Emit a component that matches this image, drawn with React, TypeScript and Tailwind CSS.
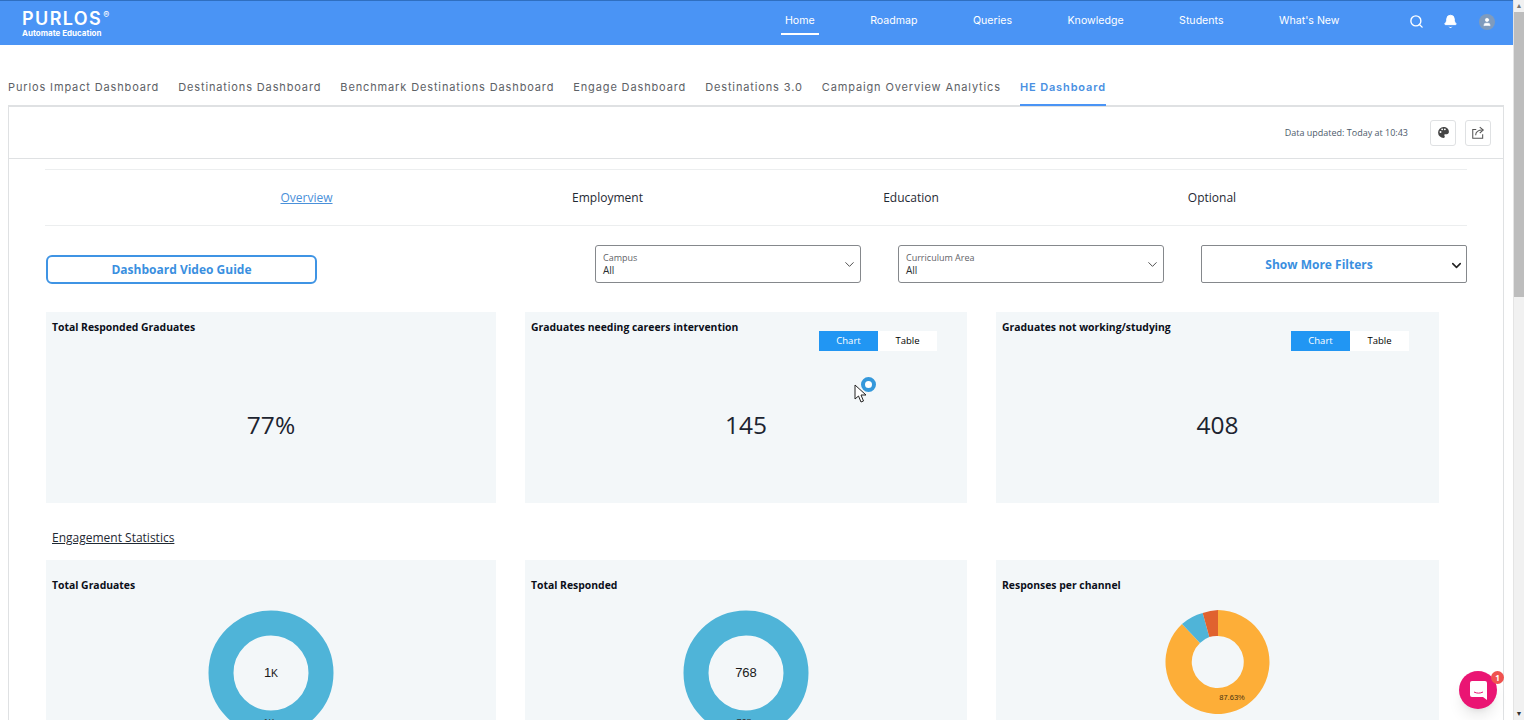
import { Bell, ChevronDown, Search, User } from "lucide-react"

const navItems = [
  { label: "Home", active: true },
  { label: "Roadmap" },
  { label: "Queries" },
  { label: "Knowledge" },
  { label: "Students" },
  { label: "What's New" },
]

const tabs = [
  "Purlos Impact Dashboard",
  "Destinations Dashboard",
  "Benchmark Destinations Dashboard",
  "Engage Dashboard",
  "Destinations 3.0",
  "Campaign Overview Analytics",
  "HE Dashboard",
]

function ChartToggle() {
  return (
    <div className="flex h-[20px] w-[118px] text-[9.5px] leading-[20px]">
      <div className="w-[59px] bg-[#2196f3] text-center text-white">Chart</div>
      <div className="w-[59px] bg-white text-center text-black">Table</div>
    </div>
  )
}

function Card({ title, width, toggle, value, low, children }: { title: string; width: string; toggle?: boolean; value?: string; low?: boolean; children?: React.ReactNode }) {
  return (
    <div className={`${width} ${low ? "pt-[18px]" : "pt-[8px]"} relative h-[191px] shrink-0 bg-[#f3f7f9] px-[6px]`}>
      <div className="flex h-[14px] justify-between">
        <h3 className="text-[10.4px] font-bold leading-[14px] text-[#0b0f19]">{title}</h3>
        {toggle && (
          <div className="mr-[24px] mt-[11px]">
            <ChartToggle />
          </div>
        )}
      </div>
      {value && <div className="absolute inset-x-0 top-[95px] text-center text-[24.5px] leading-[36px] text-[#1c2430]">{value}</div>}
      {children}
    </div>
  )
}

function Ring({ label, small, tail }: { label: string; small?: string; tail: string }) {
  return (
    <svg width="126" height="160" viewBox="0 0 126 160" className="mx-auto mt-[18px] block font-['Liberation_Sans',sans-serif]">
      <circle cx="63" cy="63" r="50" fill="none" stroke="#4fb4d8" strokeWidth="25" />
      <text x="63" y="67" textAnchor="middle" fontSize="13" fill="#1a1a1a">
        {label}
        {small && <tspan fontSize="10.500">{small}</tspan>}
      </text>
      <text x="61" y="115" textAnchor="middle" fontSize="9" fill="#333">{tail}</text>
    </svg>
  )
}

function Pie() {
  // 87.63% orange, then blue and red up to the top of the ring
  return (
    <svg width="106" height="106" viewBox="0 0 106 106" className="mx-auto mt-[17px] block font-['Liberation_Sans',sans-serif]">
      <path d="M53 1 A52 52 0 1 1 17 15 L35 34 A26 26 0 1 0 53 27 Z" fill="#fdae38" />
      <path d="M17 15 A52 52 0 0 1 37.700 4 L44.300 28 A26 26 0 0 0 35 34 Z" fill="#4fb4d8" />
      <path d="M37.700 4 A52 52 0 0 1 53 1 L53 27 A26 26 0 0 0 44.300 28 Z" fill="#e0622f" />
      <text x="67" y="90.500" textAnchor="middle" fontSize="7.500" fill="#4a3410">87.63%</text>
    </svg>
  )
}

function FilterSelect({ label }: { label: string }) {
  return (
    <div className="flex h-[38px] w-[266px] items-center justify-between rounded-[3px] border border-[#85888c] pl-[7px] pr-[3px]">
      <div className="leading-[13px]">
        <div className="text-[9px] text-[#5f6368]">{label}</div>
        <div className="text-[10px] text-[#2b2f33]">All</div>
      </div>
      <ChevronDown className="h-[15px] w-[15px] text-[#444]" strokeWidth={1.5} />
    </div>
  )
}

export default function App() {
  return (
    <div className="flex h-[720px] w-[1524px] overflow-hidden bg-white font-['Open_Sans',sans-serif]">
      <div className="relative w-[1513px] shrink-0">
        <header className="flex h-[45px] items-center border-t border-[#2f6fc0] bg-[#4a94f5] text-white">
          <div className="ml-[22px] w-[763px] shrink-0 font-['Inter',sans-serif]">
            <div className="flex items-start text-[18px] font-semibold leading-[20px] tracking-[1.4px]">
              PURLOS<span className="ml-[1px] text-[9px] font-normal leading-[12px]">®</span>
            </div>
            <div className="text-[8px] font-bold leading-[9px]">Automate Education</div>
          </div>
          <nav className="flex h-full pb-[5px] font-['Inter',sans-serif] text-[10.6px]">
            {navItems.map((item) => (
              <div key={item.label} className="relative mr-[55.5px] flex items-center last:mr-0">
                {item.label}
                {item.active && <div className="absolute -inset-x-[4px] top-[32px] h-[2px] bg-white" />}
              </div>
            ))}
          </nav>
          <div className="mb-[3px] ml-[69px] flex items-center">
            <Search className="h-[15px] w-[15px]" strokeWidth={2.2} />
            <Bell className="ml-[19px] h-[15px] w-[15px] fill-white" strokeWidth={1.5} />
            <div className="ml-[21px] flex h-[16px] w-[16px] items-center justify-center rounded-full bg-[#7f9bbd]">
              <User className="h-[10px] w-[10px] fill-white" strokeWidth={1.5} />
            </div>
          </div>
        </header>

        <div className="ml-[8px] mt-[28px] flex h-[32px] items-start font-['Inter',sans-serif] text-[11px] tracking-[0.865px] text-[#5d6166]">
          {tabs.map((tab) => (
            <div
              key={tab}
              className={
                tab === "HE Dashboard"
                  ? "relative mr-[19px] h-[33px] border-b-2 border-[#4a94f5] pt-[6px] font-semibold text-[#4a90e2]"
                  : "mr-[19px] h-[32px] pt-[6px]"
              }
            >
              {tab}
            </div>
          ))}
        </div>

        <div className="ml-[8px] h-[615px] w-[1496px] border-x border-t-2 border-[#dfe1e3]">
          <div className="flex h-[52px] items-center justify-end border-b border-[#dfe1e3] pr-[12px]">
            <span className="mr-[22px] text-[9px] text-[#4d5b6b]">Data updated: Today at 10:43</span>
            <div className="flex h-[26px] w-[26px] items-center justify-center rounded-[3px] border border-[#dfe1e3]">
              <svg width="13" height="13" viewBox="0 0 24 24" fill="#444">
                <path d="M12 2a10 10 0 1 0 0 20c1.600 0 2.400-1 2.400-2.200 0-1.400-1-1.800-1-3 0-1 .8-1.800 2-1.800h2.600c2.200 0 4-1.800 4-4C22 5.400 17.500 2 12 2zM6.500 13a1.800 1.800 0 1 1 0-3.600 1.800 1.800 0 0 1 0 3.600zm3-5a1.800 1.800 0 1 1 0-3.600 1.800 1.800 0 0 1 0 3.600zm5 0a1.800 1.800 0 1 1 0-3.600 1.800 1.800 0 0 1 0 3.600z" />
              </svg>
            </div>
            <div className="ml-[9px] flex h-[26px] w-[26px] items-center justify-center rounded-[3px] border border-[#dfe1e3]">
              <svg width="14" height="14" viewBox="0 0 24 24" fill="none" stroke="#555" strokeWidth="1.800">
                <path d="M9 6H3v15h17v-7" />
                <path d="M8 16c0-6 4-9 12-9" />
                <path d="M15 2l6 5-6 5" />
              </svg>
            </div>
          </div>

          <div className="mx-[36px] mt-[10px] w-[1422px]">
            <div className="grid h-[57px] grid-cols-[301px_301px_306px_296px] items-center border-y border-[#eceeef] pl-[111px] text-center text-[12px] text-[#1f2933]">
              <span className="text-[#4a90d9] underline">Overview</span>
              <span>Employment</span>
              <span>Education</span>
              <span>Optional</span>
            </div>

            <div className="ml-[1px] mt-[19px] flex items-start">
              <button className="mt-[10px] h-[29px] w-[271px] rounded-[6px] border-2 border-[#3f94e4] text-[12px] font-bold text-[#3a8fe0]">
                Dashboard Video Guide
              </button>
              <div className="ml-[278px]">
                <FilterSelect label="Campus" />
              </div>
              <div className="ml-[37px]">
                <FilterSelect label="Curriculum Area" />
              </div>
              <div className="relative ml-[37px] flex h-[38px] w-[266px] items-center justify-center rounded-[2px] border border-[#85888c] pr-[30px] pt-[2px] text-[12px] font-bold text-[#3a8fe0]">
                Show More Filters
                <ChevronDown className="absolute right-[2px] h-[15px] w-[15px] text-[#222]" strokeWidth={2.5} />
              </div>
            </div>

            <div className="ml-[1px] mt-[28px] flex gap-[29px]">
              <Card title="Total Responded Graduates" width="w-[450px]" value="77%" />
              <Card title="Graduates needing careers intervention" width="w-[442px]" toggle value="145" />
              <Card title="Graduates not working/studying" width="w-[443px]" toggle value="408" />
            </div>

            <div className="ml-[7px] mt-[26px] h-[31px] text-[12px] leading-[18px] text-[#1f2933] underline">Engagement Statistics</div>

            <div className="ml-[1px] flex gap-[29px]">
              <Card title="Total Graduates" width="w-[450px]" low>
                <Ring label="1" small="K" tail="1K" />
              </Card>
              <Card title="Total Responded" width="w-[442px]" low>
                <Ring label="768" tail="768" />
              </Card>
              <Card title="Responses per channel" width="w-[443px]" low>
                <Pie />
              </Card>
            </div>
          </div>
        </div>

        {/* cursor sitting over the middle card */}
        <div className="absolute left-[861px] top-[377px] h-[15px] w-[15px] rounded-full border-[4px] border-[#3498db] bg-white" />
        <svg width="14" height="20" viewBox="0 0 14 20" className="absolute left-[854px] top-[384px]">
          <path d="M1 1 L1 15 L4.500 12 L7 18 L9.500 17 L7 11 L12 11 Z" fill="#fff" stroke="#222" strokeWidth="1" />
        </svg>

        {/* messenger bubble */}
        <div className="absolute left-[1459px] top-[671px] flex h-[38px] w-[38px] items-center justify-center rounded-full bg-[#ea1573] shadow-lg">
          <svg width="17" height="19" viewBox="0 0 17 19">
            <path d="M2 0h13a2 2 0 0 1 2 2v17l-4-3H2a2 2 0 0 1-2-2V2a2 2 0 0 1 2-2z" fill="#fff" />
            <path d="M4 11c3 1.500 6 1.500 9 0" fill="none" stroke="#ea1573" strokeWidth="1" />
          </svg>
          <div className="absolute left-[32px] top-0 flex h-[13px] w-[13px] items-center justify-center rounded-full bg-[#f0524f] text-[8px] font-bold text-white">1</div>
        </div>
      </div>

      <div className="flex w-[11px] shrink-0 flex-col border-l border-[#e4e4e4] bg-[#f1f1f1]">
        <div className="h-[12px] text-center text-[7px] leading-[12px] text-[#777]">▲</div>
        <div className="h-[285px] bg-[#bdbdbd]" />
        <div className="flex-1" />
        <div className="h-[12px] text-center text-[7px] leading-[12px] text-[#333]">▼</div>
      </div>
    </div>
  )
}
